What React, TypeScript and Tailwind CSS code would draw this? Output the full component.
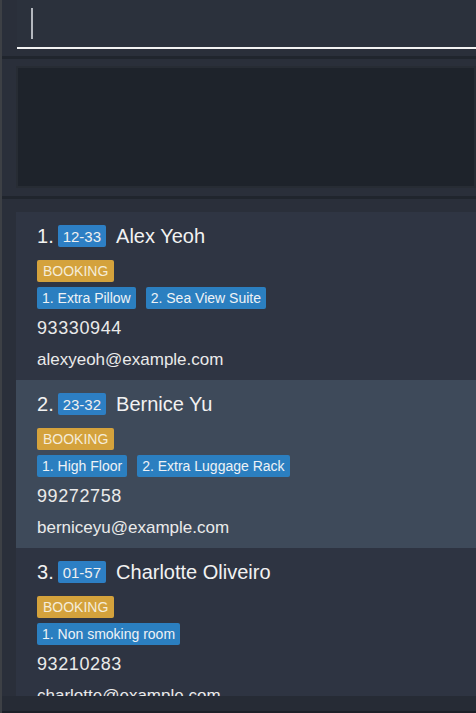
import React from "react";

type Person = {
  idx: number;
  room: string;
  name: string;
  tags: string[];
  phone: string;
  email: string;
  bg: string;
};

const people: Person[] = [
  {
    idx: 1,
    room: "12-33",
    name: "Alex Yeoh",
    tags: ["1. Extra Pillow", "2. Sea View Suite"],
    phone: "93330944",
    email: "alexyeoh@example.com",
    bg: "bg-[#2f3543]",
  },
  {
    idx: 2,
    room: "23-32",
    name: "Bernice Yu",
    tags: ["1. High Floor", "2. Extra Luggage Rack"],
    phone: "99272758",
    email: "berniceyu@example.com",
    bg: "bg-[#3e4a5a]",
  },
  {
    idx: 3,
    room: "01-57",
    name: "Charlotte Oliveiro",
    tags: ["1. Non smoking room"],
    phone: "93210283",
    email: "charlotte@example.com",
    bg: "bg-[#2e3442]",
  },
];

function Card({ p }: { p: Person }) {
  return (
    <div className={`h-[168px] shrink-0 pl-[21px] flex flex-col ${p.bg}`}>
      <div className="mt-[13px] h-[22px] flex items-center">
        <span className="text-[20px] text-[#f2f2f2] leading-none">{p.idx}.</span>
        <span className="ml-[4px] h-[22px] px-[5px] rounded-[2px] bg-[#2d7fc4] text-[15px] text-[#f0f0f0] flex items-center leading-none">
          {p.room}
        </span>
        <span className="ml-[10px] text-[20px] text-[#f2f2f2] leading-none whitespace-nowrap">{p.name}</span>
      </div>
      <div className="mt-[13px] h-[22px] flex">
        <span className="h-[22px] px-[6px] rounded-[2px] bg-[#d4a23c] text-[14px] text-[#f5ecd8] flex items-center leading-none">
          BOOKING
        </span>
      </div>
      <div className="mt-[5px] h-[22px] flex gap-[10px]">
        {p.tags.map((t) => (
          <span
            key={t}
            className="h-[22px] px-[5px] rounded-[2px] bg-[#2b7fc0] text-[14px] text-[#eef2f6] flex items-center leading-none whitespace-nowrap"
          >
            {t}
          </span>
        ))}
      </div>
      <div className="mt-[8px] h-[22px] flex items-center text-[18px] tracking-[0.6px] text-[#eaeaea] leading-none">
        {p.phone}
      </div>
      <div className="mt-[9px] h-[22px] flex items-center text-[17px] text-[#eaeaea] leading-none whitespace-nowrap">
        {p.email}
      </div>
    </div>
  );
}

export default function App() {
  return (
    <div className="w-[476px] h-[713px] overflow-hidden bg-[#2a2f3a] flex font-['Liberation_Sans',Arial,sans-serif]">
      <div className="w-[2px] shrink-0 bg-[#3d4045]" />
      <div className="flex-1 flex flex-col min-w-0">
        <div className="ml-[15px] h-[49px] shrink-0 bg-[#2b313c] border-b-2 border-[#f2f2f2] pl-[14px] pt-[8px]">
          <div className="w-[2px] h-[31px] bg-[#b4b8be]" />
        </div>
        <div className="mt-[7px] h-[3px] shrink-0 bg-[#20252d]" />
        <div className="mt-[7px] ml-[14px] h-[122px] shrink-0 border-2 border-[#272c34] bg-[#1e232b]" />
        <div className="mt-[8px] h-[3px] shrink-0 bg-[#20252d]" />
        <div className="flex-1 flex flex-col min-h-0">
          <div className="pl-[14px] pt-[13px] h-[497px] shrink-0 overflow-hidden flex flex-col">
            {people.map((p) => (
              <Card key={p.idx} p={p} />
            ))}
          </div>
          <div className="flex-1 bg-[#262b35]" />
          <div className="h-[2px] shrink-0 bg-[#1c2028]" />
        </div>
      </div>
    </div>
  );
}
